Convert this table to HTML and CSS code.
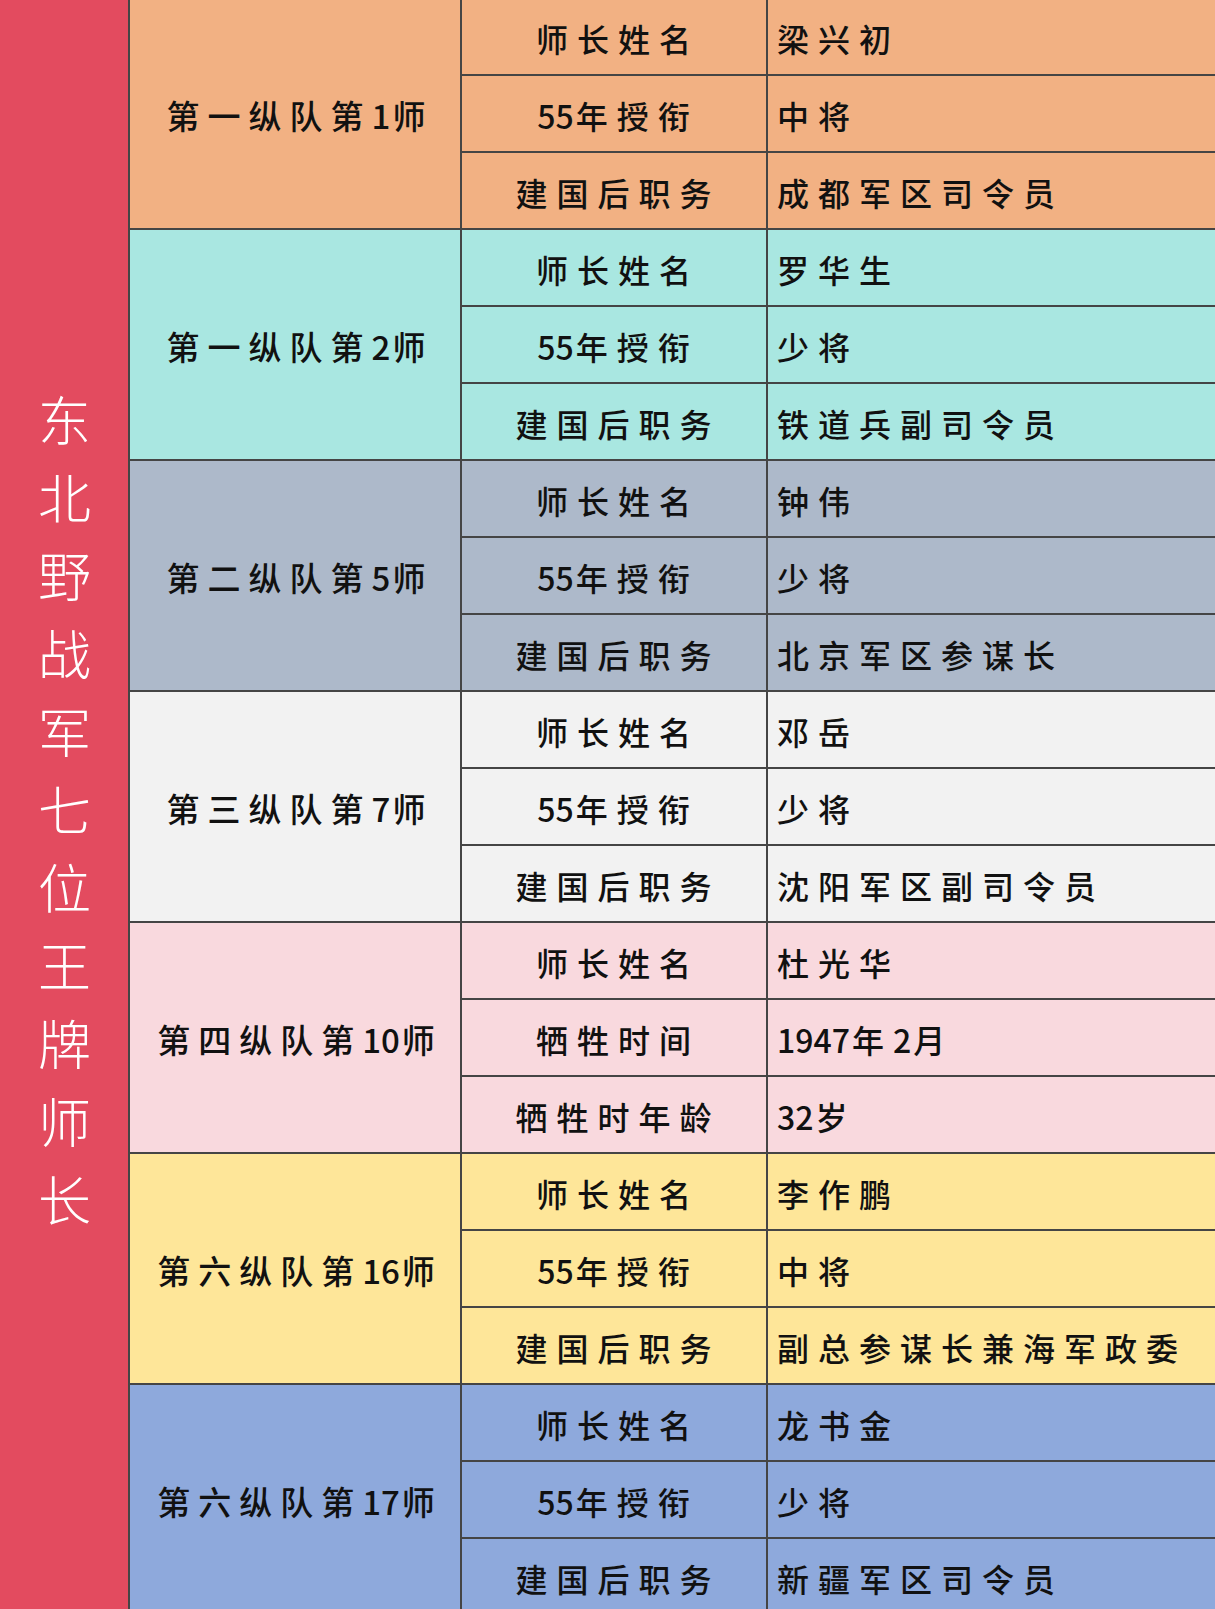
FILE: index.html
```html
<!DOCTYPE html>
<html lang="zh-CN">
<head>
<meta charset="utf-8">
<title>东北野战军七位王牌师长</title>
<link rel="stylesheet" href="styles.css">
</head>
<body>
<div class="page">
  <div class="title"><span>东北野战军七位王牌师长</span></div>
  <div class="table">
    <div class="group g-orange">
      <div class="label">第一纵队第<span class="num">1</span>师</div>
      <div class="key">师长姓名</div><div class="val">梁兴初</div>
      <div class="key"><span class="num">55</span>年授衔</div><div class="val">中将</div>
      <div class="key">建国后职务</div><div class="val">成都军区司令员</div>
    </div>
    <div class="group g-teal">
      <div class="label">第一纵队第<span class="num">2</span>师</div>
      <div class="key">师长姓名</div><div class="val">罗华生</div>
      <div class="key"><span class="num">55</span>年授衔</div><div class="val">少将</div>
      <div class="key">建国后职务</div><div class="val">铁道兵副司令员</div>
    </div>
    <div class="group g-slate">
      <div class="label">第二纵队第<span class="num">5</span>师</div>
      <div class="key">师长姓名</div><div class="val">钟伟</div>
      <div class="key"><span class="num">55</span>年授衔</div><div class="val">少将</div>
      <div class="key">建国后职务</div><div class="val">北京军区参谋长</div>
    </div>
    <div class="group g-gray">
      <div class="label">第三纵队第<span class="num">7</span>师</div>
      <div class="key">师长姓名</div><div class="val">邓岳</div>
      <div class="key"><span class="num">55</span>年授衔</div><div class="val">少将</div>
      <div class="key">建国后职务</div><div class="val">沈阳军区副司令员</div>
    </div>
    <div class="group g-pink">
      <div class="label">第四纵队第<span class="num">10</span>师</div>
      <div class="key">师长姓名</div><div class="val">杜光华</div>
      <div class="key">牺牲时间</div><div class="val"><span class="num">1947</span>年<span class="num">2</span>月</div>
      <div class="key">牺牲时年龄</div><div class="val"><span class="num">32</span>岁</div>
    </div>
    <div class="group g-yellow">
      <div class="label">第六纵队第<span class="num">16</span>师</div>
      <div class="key">师长姓名</div><div class="val">李作鹏</div>
      <div class="key"><span class="num">55</span>年授衔</div><div class="val">中将</div>
      <div class="key">建国后职务</div><div class="val">副总参谋长兼海军政委</div>
    </div>
    <div class="group g-blue">
      <div class="label">第六纵队第<span class="num">17</span>师</div>
      <div class="key">师长姓名</div><div class="val">龙书金</div>
      <div class="key"><span class="num">55</span>年授衔</div><div class="val">少将</div>
      <div class="key">建国后职务</div><div class="val">新疆军区司令员</div>
    </div>
  </div>
</div>
</body>
</html>
```
FILE: styles.css
```css
html, body {
  margin: 0;
  padding: 0;
}
body {
  width: 1215px;
  height: 1609px;
  overflow: hidden;
  font-family: "Noto Sans CJK SC", "Noto Sans", sans-serif;
  color: #111;
}
.page {
  display: flex;
  height: 1609px;
}
.title {
  width: 128px;
  flex: none;
  background: #e34b5f;
  display: flex;
  align-items: center;
  justify-content: center;
  color: #fff;
}
.title span {
  writing-mode: vertical-rl;
  font-size: 53px;
  font-weight: 300;
  letter-spacing: 25px;
  line-height: 1;
  padding-top: 36px;
}
.table {
  flex: 1;
  margin-top: -1px;
  border-left: 2px solid #454545;
}
.group {
  display: grid;
  grid-template-columns: 332px 306px 1fr;
  grid-template-rows: repeat(3, 77px);
}
.group > div {
  box-sizing: border-box;
  border-bottom: 2px solid #454545;
  display: flex;
  align-items: center;
  font-size: 32px;
  font-weight: 500;
  letter-spacing: 9px;
  padding-top: 3px;
}
.group > .label {
  grid-row: 1 / span 3;
  grid-column: 1;
  justify-content: center;
  border-right: 2px solid #454545;
  font-size: 33px;
  letter-spacing: 8px;
  padding-left: 10px;
}
.key {
  grid-column: 2;
  justify-content: center;
  border-right: 2px solid #454545;
  padding-left: 8px;
}
.val {
  grid-column: 3;
  padding-left: 9px;
}
.num {
  letter-spacing: 0;
  margin-right: 2px;
}
.g-orange { background: #f2b183; }
.g-teal { background: #a9e7e1; }
.g-slate { background: #adb9ca; }
.g-gray { background: #f2f2f2; }
.g-pink { background: #f9d9de; }
.g-yellow { background: #fee699; }
.g-blue { background: #8ea9dc; }
```
